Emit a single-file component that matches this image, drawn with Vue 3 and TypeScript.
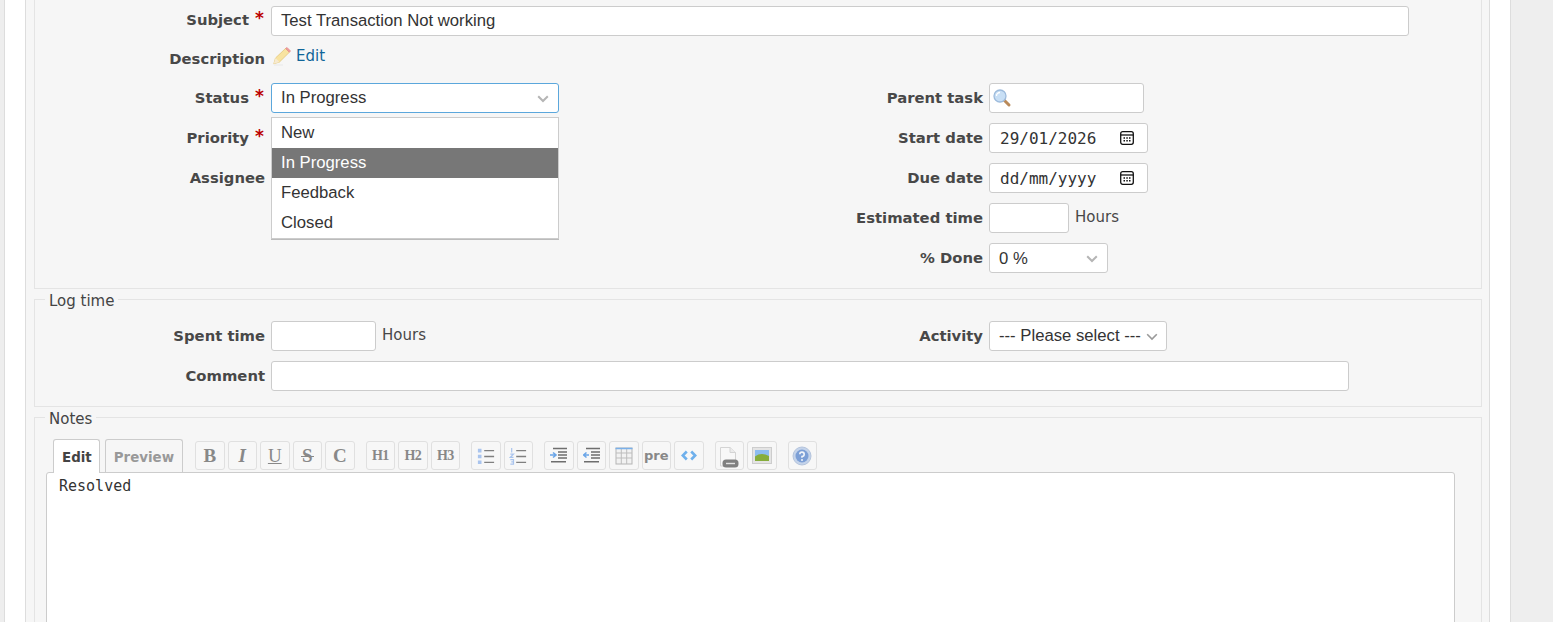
<script setup lang="ts">
const toolbar: { key: string; label?: string; cls?: string; gap?: boolean }[] = [
  { key: 'b', label: 'B', cls: 'tb-b' },
  { key: 'i', label: 'I', cls: 'tb-i' },
  { key: 'u', label: 'U', cls: 'tb-u' },
  { key: 's', label: 'S', cls: 'tb-s' },
  { key: 'c', label: 'C', cls: 'tb-c' },
  { key: 'h1', label: 'H1', cls: 'tb-h', gap: true },
  { key: 'h2', label: 'H2', cls: 'tb-h' },
  { key: 'h3', label: 'H3', cls: 'tb-h' },
  { key: 'ul', gap: true },
  { key: 'ol' },
  { key: 'indent', gap: true },
  { key: 'outdent' },
  { key: 'table' },
  { key: 'pre', label: 'pre', cls: 'tb-pre' },
  { key: 'code' },
  { key: 'link', gap: true },
  { key: 'img' },
  { key: 'help', gap: true },
]
const statusOptions = ['New', 'In Progress', 'Feedback', 'Closed']
</script>

<template>
  <div class="page">
    <main class="sheet">
      <section class="panel">
        <fieldset class="box attrs">
          <div class="row row-first">
            <label class="lbl">Subject <b class="req">*</b></label>
            <div class="input subject">Test Transaction Not working</div>
          </div>
          <div class="row desc">
            <label class="lbl lbl-desc">Description</label>
            <svg class="pencil" width="18" height="19" viewBox="0 0 18 19">
              <path d="M.8 16.800 2.500 11 12.500 1.500 16.300 5.300 6.500 15Z" fill="#f8e3a0" stroke="#e2c67a" stroke-width=".8"/>
              <path d="M12.500 1.500 14 .4 17.600 4 16.300 5.300Z" fill="#f09a9a" stroke="#e08a8a" stroke-width=".6"/>
              <path d="M.8 16.800 2.500 11 6.500 15Z" fill="#f7ead0"/>
              <path d="M1 18h9" stroke="#ececec" stroke-width="1.500"/>
            </svg>
            <a class="edit">Edit</a>
          </div>
          <div class="cols">
            <div class="col left">
              <div class="row row-status">
                <label class="lbl">Status <b class="req">*</b></label>
                <div class="select status">
                  In Progress
                  <svg class="chev" width="12" height="8" viewBox="0 0 12 8"><path d="M1.200 1.200 6 6l4.800-4.800" fill="none" stroke="#b5b5b5" stroke-width="2"/></svg>
                </div>
                <ul class="menu">
                  <li v-for="o in statusOptions" :key="o" :class="{ on: o === 'In Progress' }">{{ o }}</li>
                </ul>
              </div>
              <div class="row">
                <label class="lbl">Priority <b class="req">*</b></label>
                <div class="select status"></div>
              </div>
              <div class="row">
                <label class="lbl">Assignee</label>
                <div class="select status"></div>
              </div>
            </div>
            <div class="col right">
              <div class="row">
                <label class="lbl">Parent task</label>
                <div class="input parent">
                  <svg class="mag" width="20" height="20" viewBox="0 0 20 20">
                    <path d="M11.500 11.500 17 17" stroke="#b98a5a" stroke-width="3" stroke-linecap="round"/>
                    <circle cx="8" cy="8" r="6" fill="#c8dff5" stroke="#9dbbdc" stroke-width="1.300"/>
                    <path d="M4.500 8A3.500 3.500 0 0 1 8 4.500" fill="none" stroke="#fff" stroke-width="1.300"/>
                  </svg>
                </div>
              </div>
              <div class="row">
                <label class="lbl">Start date</label>
                <div class="input date">
                  <span>29/01/2026</span>
                  <svg class="cal" width="14" height="14" viewBox="0 0 14 14">
                    <rect x=".7" y=".7" width="12.600" height="12.600" rx="2" fill="none" stroke="#111" stroke-width="1.300"/>
                    <path d="M1 4h12" stroke="#111" stroke-width="1.300"/>
                    <path d="M3.500 6.200h1.500v1.500h-1.500zM6.300 6.200h1.500v1.500h-1.500zM9 6.200h1.500v1.500H9zM3.500 9h1.500v1.500h-1.500zM6.300 9h1.500v1.500h-1.500zM9 9h1.500v1.500H9z" fill="#111"/>
                  </svg>
                </div>
              </div>
              <div class="row">
                <label class="lbl">Due date</label>
                <div class="input date">
                  <span>dd/mm/yyyy</span>
                  <svg class="cal" width="14" height="14" viewBox="0 0 14 14">
                    <rect x=".7" y=".7" width="12.600" height="12.600" rx="2" fill="none" stroke="#111" stroke-width="1.300"/>
                    <path d="M1 4h12" stroke="#111" stroke-width="1.300"/>
                    <path d="M3.500 6.200h1.500v1.500h-1.500zM6.300 6.200h1.500v1.500h-1.500zM9 6.200h1.500v1.500H9zM3.500 9h1.500v1.500h-1.500zM6.300 9h1.500v1.500h-1.500zM9 9h1.500v1.500H9z" fill="#111"/>
                  </svg>
                </div>
              </div>
              <div class="row">
                <label class="lbl">Estimated time</label>
                <div class="input est"></div>
                <span class="unit">Hours</span>
              </div>
              <div class="row">
                <label class="lbl">% Done</label>
                <div class="select done">
                  0 %
                  <svg class="chev" width="12" height="8" viewBox="0 0 12 8"><path d="M1.200 1.200 6 6l4.800-4.800" fill="none" stroke="#b5b5b5" stroke-width="2"/></svg>
                </div>
              </div>
            </div>
          </div>
        </fieldset>

        <fieldset class="box log">
          <legend>Log time</legend>
          <div class="cols">
            <div class="col left">
              <div class="row">
                <label class="lbl">Spent time</label>
                <div class="input spent"></div>
                <span class="unit">Hours</span>
              </div>
            </div>
            <div class="col right">
              <div class="row">
                <label class="lbl">Activity</label>
                <div class="select activity">
                  --- Please select ---
                  <svg class="chev chev-tight" width="12" height="8" viewBox="0 0 12 8"><path d="M1.200 1.200 6 6l4.800-4.800" fill="none" stroke="#9a9a9a" stroke-width="1.600"/></svg>
                </div>
              </div>
            </div>
          </div>
          <div class="row">
            <label class="lbl">Comment</label>
            <div class="input comment"></div>
          </div>
        </fieldset>

        <fieldset class="box notes">
          <legend>Notes</legend>
          <div class="tabs">
            <a class="tab active">Edit</a>
            <a class="tab">Preview</a>
            <div class="toolbar">
              <button
                v-for="t in toolbar"
                :key="t.key"
                class="tb"
                :class="[t.cls, { gap: t.gap }]"
                type="button"
              >
                <template v-if="t.label">{{ t.label }}</template>
                <svg v-else-if="t.key === 'ul'" width="18" height="18" viewBox="0 0 20 20">
                  <path d="M1 2h4v4H1zM1 8.500h4v4H1zM1 15h4v4H1z" fill="#a9c4ee"/>
                  <path d="M8 4h11M8 10.500h11M8 17h11" stroke="#808080" stroke-width="1.500"/>
                </svg>
                <svg v-else-if="t.key === 'ol'" width="18" height="18" viewBox="0 0 20 20">
                  <path d="M3 1v5M1.500 8h3.500l-3.500 3.500h3.500M1.500 14h3.500v5H1.500M2.500 16.500H5" fill="none" stroke="#a9c4ee" stroke-width="1.300"/>
                  <path d="M8 4h11M8 10.500h11M8 17h11" stroke="#808080" stroke-width="1.500"/>
                </svg>
                <svg v-else-if="t.key === 'indent'" width="17" height="17" viewBox="0 0 17 17">
                  <path d="M3 1.500h14M8 5h9M8 8h9M8 11h9M1 14.800h15" stroke="#6e6e6e" stroke-width="1.500"/>
                  <path d="M0 8h5M3 5.500 6 8l-3 2.500" fill="none" stroke="#6aa5e8" stroke-width="1.600"/>
                </svg>
                <svg v-else-if="t.key === 'outdent'" width="17" height="17" viewBox="0 0 17 17">
                  <path d="M3 1.500h14M8 5h9M8 8h9M8 11h9M1 14.800h15" stroke="#6e6e6e" stroke-width="1.500"/>
                  <path d="M6 8H1M3.500 5.500.5 8l3 2.500" fill="none" stroke="#6aa5e8" stroke-width="1.600"/>
                </svg>
                <svg v-else-if="t.key === 'table'" width="18" height="18" viewBox="0 0 18 18">
                  <rect x="1" y="1" width="16" height="16" fill="#f2f2f2" stroke="#b5b5b5"/>
                  <path d="M1 6h16M1 11h16M6.300 1v16M11.700 1v16" stroke="#bdbdbd"/>
                  <path d="M.5 1.500h17" stroke="#7ab0ea" stroke-width="1.500"/>
                </svg>
                <svg v-else-if="t.key === 'code'" width="16" height="11" viewBox="0 0 18 12">
                  <path d="M6.500 1.500 2 6l4.500 4.500M11.500 1.500 16 6l-4.500 4.500" fill="none" stroke="#6fb0ec" stroke-width="3"/>
                </svg>
                <svg v-else-if="t.key === 'link'" class="ic-link" width="20" height="21" viewBox="0 0 20 21">
                  <path d="M1.500 .5H11L16.500 5.500V19H1.500Z" fill="#f8f8f8" stroke="#d4d4d4"/>
                  <path d="M11 .5V5.500H16.500" fill="#ececec" stroke="#d4d4d4"/>
                  <rect x="3.500" y="12.500" width="16" height="8" rx="3.500" fill="#808080"/>
                  <path d="M7 16.500h9" stroke="#e2e2e2" stroke-width="1.400"/>
                </svg>
                <svg v-else-if="t.key === 'img'" width="20" height="17" viewBox="0 0 20 17">
                  <rect x=".5" y=".5" width="19" height="16" fill="#e4e4e4" stroke="#cdcdcd"/>
                  <rect x="3" y="3" width="14" height="11" fill="#8cbcf0"/>
                  <path d="M3 14V9.500Q9 5 17 9V14Z" fill="#86ad3c"/>
                </svg>
                <svg v-else-if="t.key === 'help'" width="20" height="20" viewBox="0 0 20 20">
                  <circle cx="10" cy="10" r="9" fill="#c4d3ea" stroke="#b4c4dc"/>
                  <circle cx="10" cy="10" r="6.500" fill="#7c9fd6"/>
                  <path d="M7.800 8.200A2.200 2.200 0 1 1 10 10.500V11.800" fill="none" stroke="#f0f4fa" stroke-width="1.600"/>
                  <circle cx="10" cy="14" r="1" fill="#f0f4fa"/>
                </svg>
              </button>
            </div>
          </div>
          <div class="textarea">Resolved</div>
        </fieldset>
      </section>
    </main>
  </div>
</template>

<style>
html, body { margin: 0; background: #eee; }
</style>

<style scoped>
.page {
  height: 622px;
  overflow: hidden;
  background: #eee;
  padding-left: 4px;
  box-sizing: border-box;
  color: #484848;
  font-family: "DejaVu Sans", Verdana, sans-serif;
  font-size: 14px;
}
.sheet {
  width: 1507px;
  box-sizing: border-box;
  min-height: 622px;
  background: #fff;
  border-left: 1px solid #ddd;
  border-right: 1px solid #ddd;
  padding: 0 20px;
}
.panel {
  background: #f6f6f6;
  border-left: 1px solid #ddd;
  border-right: 1px solid #ddd;
  padding: 0 7px 0 8px;
  min-height: 622px;
  box-sizing: border-box;
}
.box {
  margin: 0;
  border: 1px solid #e4e4e4;
  min-width: 0;
  padding: 0;
}
.box legend {
  margin-left: 10px;
  padding: 4px 4px 0;
  font-size: 15px;
  line-height: 17px;
  color: #444;
}
.attrs {
  border-top: none;
  padding: 6px 0 16px;
  height: 289px;
  box-sizing: border-box;
}
.log {
  height: 118px;
  box-sizing: border-box;
  padding-top: 11px;
}
.notes {
  height: 400px;
  box-sizing: border-box;
  padding: 11px 26px 0 11px;
}
.notes legend { margin-left: -1px; }
.row {
  display: flex;
  align-items: center;
  gap: 6px;
  height: 30px;
  margin-bottom: 10px;
  position: relative;
}
.lbl {
  width: 230px;
  flex: none;
  text-align: right;
  font-weight: 700;
  font-size: 14.800px;
  color: #484848;
  white-space: nowrap;
  padding-bottom: 2px;
}
.right .lbl { width: 231px; }
.row-first .lbl { padding-bottom: 4px; }
.req {
  color: #bb0000;
  font-size: 17px;
  line-height: 1;
  margin: 0 1px;
  vertical-align: 1px;
}
.input, .select {
  flex: none;
  height: 30px;
  box-sizing: border-box;
  background: #fff;
  border: 1px solid #ccc;
  border-radius: 3px;
  font-family: "Liberation Sans", Arial, sans-serif;
  font-size: 16.700px;
  color: #333;
  display: flex;
  align-items: center;
  padding-left: 9px;
}
.subject { width: 1138px; }
.desc { height: 33px; margin-bottom: 4px; align-items: flex-start; }
.lbl-desc { padding-top: 4px; }
.pencil { margin-top: 1px; margin-left: 2px; }
.edit {
  color: #169;
  font-size: 15px;
  margin-left: -1px;
  margin-top: 0;
  line-height: 20px;
}
.cols { display: flex; }
.col.left { width: 717px; flex: none; }
.status { width: 288px; position: relative; }
.row-status .status { border-color: #5ba7dc; }
.chev { position: absolute; right: 9px; top: 11px; }
.chev-tight { right: 8px; }
.menu {
  position: absolute;
  left: 236px;
  top: 34px;
  z-index: 5;
  width: 288px;
  box-sizing: border-box;
  margin: 0;
  padding: 0;
  list-style: none;
  background: #fff;
  border: 1px solid #ccc;
  box-shadow: 0 1px 0 #bbb;
  font-family: "Liberation Sans", Arial, sans-serif;
  font-size: 16.700px;
  color: #333;
}
.menu li { height: 30px; line-height: 29px; padding-left: 9px; }
.menu li.on { background: #777; color: #fff; }
.parent { width: 155px; padding-left: 2px; }
.date {
  width: 159px;
  padding-left: 10px;
  font-family: "DejaVu Sans Mono", monospace;
  font-size: 16px;
  position: relative;
}
.cal { position: absolute; right: 13px; top: 7px; }
.est { width: 80px; }
.done { width: 119px; position: relative; padding-top: 1px; }
.spent { width: 105px; }
.activity { width: 178px; position: relative; }
.comment { width: 1078px; }
.unit { font-size: 15px; color: #484848; padding-bottom: 2px; }
.tabs {
  display: flex;
  align-items: flex-end;
  padding-left: 7px;
  height: 33px;
}
.tab {
  box-sizing: border-box;
  height: 33px;
  border: 1px solid #ccc;
  border-bottom: none;
  border-radius: 3px 3px 0 0;
  padding: 0 8px;
  margin-right: 5px;
  font-weight: 700;
  font-size: 13.400px;
  line-height: 35px;
  color: #999;
}
.tab.active {
  height: 34px;
  margin-bottom: -1px;
  background: #fff;
  color: #444;
  position: relative;
  z-index: 2;
  padding-right: 7px;
}
.toolbar {
  display: flex;
  gap: 3px;
  margin-left: 7px;
  margin-bottom: 2px;
}
.tb {
  width: 29.500px;
  height: 29px;
  box-sizing: border-box;
  padding: 0;
  border: 1px solid #e0e0e0;
  border-radius: 3px;
  background: #f7f7f7;
  display: flex;
  align-items: center;
  justify-content: center;
  font-family: "Liberation Serif", serif;
  font-weight: 700;
  font-size: 19px;
  color: #888;
  position: relative;
}
.tb.gap { margin-left: 8px; }
.tb-i { font-style: italic; }
.tb-u { text-decoration: underline; font-weight: 400; }
.tb-s::after {
  content: "";
  position: absolute;
  left: 7px;
  right: 7px;
  top: 14px;
  height: 1px;
  background: #888;
}
.tb-h { font-size: 14px; letter-spacing: -.8px; }
.tb-pre { font-family: "DejaVu Sans", sans-serif; font-size: 13px; }
.ic-link { margin-top: 4px; }
.textarea {
  box-sizing: border-box;
  width: 1409px;
  height: 300px;
  background: #fff;
  border: 1px solid #ccc;
  border-radius: 3px 3px 0 0;
  padding: 5px 12px;
  font-family: "DejaVu Sans Mono", monospace;
  font-size: 15px;
  line-height: 17px;
  color: #333;
}
</style>
